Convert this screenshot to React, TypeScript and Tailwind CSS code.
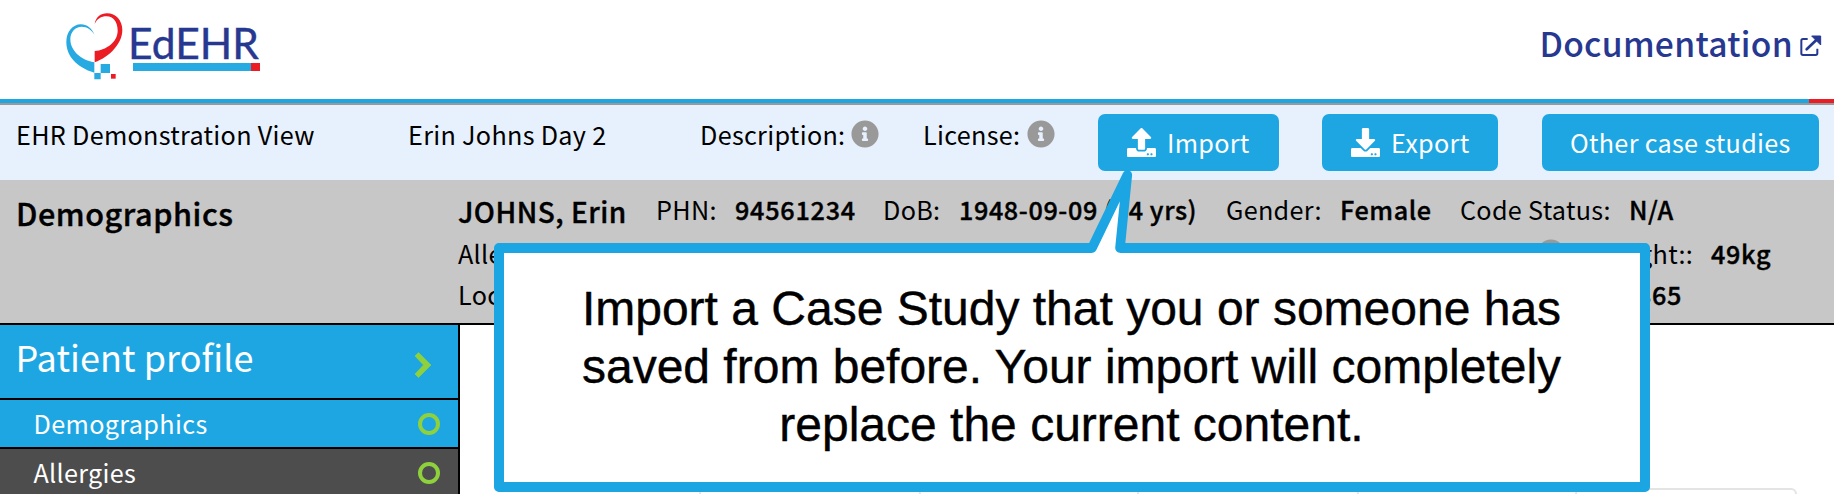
import React from 'react';
import { FaInfoCircle, FaUpload, FaDownload } from 'react-icons/fa';

function Logo() {
  return (
    <div className="ml-[66px] mt-[13px] flex h-[68px]">
      <svg className="h-[68px] w-[58px] shrink-0" viewBox="198 39 174 204">
        <path
          fill="#27a9e1"
          d="M283 104C276 85 260 73 243 73C217 73 199 97 199 126C199 168 230 202 283 218V187C240 180 211 150 211 118C211 96 226 80 245 80C262 80 275 90 283 104Z"
        />
        <path
          fill="#ec1c24"
          d="M284 72C287 52 302 40 321 40C348 40 367 62 367 90C367 130 330 170 284 187V153C320 150 353 125 353 92C353 66 340 49 320 49C303 49 291 57 284 72Z"
        />
        <path fill="#27a9e1" d="M302 192h28v27h-28zM283 219h19v19h-19z" />
        <path fill="#ec1c24" d="M333 222h14v14h-14z" />
      </svg>
      <div className="ml-[9px] mt-[9px] flex w-[127px] flex-col">
        <div className="-ml-[5px] h-[41px] whitespace-nowrap font-['Lato',sans-serif] text-[42.5px] leading-[42px] text-[#273891] [-webkit-text-stroke:0.4px_#273891]">
          EdEHR
        </div>
        <div className="h-2 border-r-[9px] border-[#ec1c24] bg-[#27a9e1]" />
      </div>
    </div>
  );
}

function ExternalLink() {
  return (
    <svg className="ml-[7px] mt-[35px] h-[22px] w-[22px] shrink-0" viewBox="899 106 66 66">
      <path d="M922 118H908Q903 118 903 123V161Q903 166 908 166H946Q951 166 951 161V147" fill="none" stroke="#273891" strokeWidth="6" />
      <path d="M919 149L948 121" stroke="#273891" strokeWidth="8" strokeLinecap="round" />
      <path d="M934 109H961V136Z" fill="#273891" stroke="#273891" strokeWidth="3" strokeLinejoin="round" />
    </svg>
  );
}

function Header() {
  return (
    <header className="flex h-[99px] justify-between">
      <Logo />
      <div className="flex pr-[12px]">
        <a className="mt-[17px] whitespace-nowrap text-[33.6px] font-medium leading-[52px] tracking-[0.3px] text-[#273891]">Documentation</a>
        <ExternalLink />
      </div>
    </header>
  );
}

const button = 'flex h-[57px] shrink-0 items-center whitespace-nowrap rounded-[7px] bg-[#1ea6e3] leading-[57px] text-white';

function DemoBar() {
  return (
    <div className="flex h-[75px] bg-[#e7f1fd] pl-[16px] pt-[9px] leading-[40px] tracking-[0.3px] whitespace-nowrap">
      <div className="w-[392px] shrink-0">EHR Demonstration View</div>
      <div className="w-[292px] shrink-0">Erin Johns Day 2</div>
      <div className="w-[151px] shrink-0">Description:</div>
      <FaInfoCircle className="mt-[6px] size-[28px] shrink-0 text-[#999999]" />
      <div className="ml-[44px] w-[104px] shrink-0">License:</div>
      <FaInfoCircle className="mt-[6px] size-[28px] shrink-0 text-[#999999]" />
      <button className={`${button} ml-[43px] w-[181px] pl-[29px]`}>
        <FaUpload className="mr-[11px] size-[29px]" />
        Import
      </button>
      <button className={`${button} ml-[43px] w-[176px] pl-[29px]`}>
        <FaDownload className="mr-[11px] size-[29px]" />
        Export
      </button>
      <button className={`${button} ml-[44px] w-[277px] pl-[28px]`}>Other case studies</button>
    </div>
  );
}

const strong = 'font-medium [-webkit-text-stroke:0.4px_black]';

function Banner() {
  return (
    <div className="flex h-[145px] border-b-2 border-black bg-[#c7c7c7] pl-[16px] whitespace-nowrap">
      <h1 className={`mt-[13px] w-[442px] shrink-0 text-[30.6px] leading-[40px] tracking-[0.55px] ${strong}`}>Demographics</h1>
      <div className="mt-[9px] flex flex-col leading-[41px] tracking-[0.3px]">
        <div className="flex h-[44px] leading-[41px]">
          <div className={`w-[198px] text-[28px] tracking-[0.5px] leading-[44px] ${strong}`}>JOHNS, Erin</div>
          <div className="w-[79px]">PHN:</div>
          <div className={`w-[148px] tracking-[0.75px] ${strong}`}>94561234</div>
          <div className="w-[76px]">DoB:</div>
          <div className={`w-[267px] tracking-[0.6px] ${strong}`}>1948-09-09 (74 yrs)</div>
          <div className="w-[114px]">Gender:</div>
          <div className={`w-[120px] tracking-[0.6px] ${strong}`}>Female</div>
          <div className="w-[169px]">Code Status:</div>
          <div className={`tracking-[0.6px] ${strong}`}>N/A</div>
        </div>
        <div className="flex h-[41px]">
          <div className="w-[1079px]">Allergies:</div>
          <FaInfoCircle className="mt-[6px] size-[28px] text-[#999999]" />
          <div className="w-[128px] text-right">Weight::</div>
          <div className={`ml-[18px] tracking-[0.7px] ${strong}`}>49kg</div>
        </div>
        <div className="flex h-[41px]">
          <div className="w-[1179px]">Location:</div>
          <div className={`tracking-[0.6px] ${strong}`}>365</div>
        </div>
      </div>
    </div>
  );
}

function Ring() {
  return <span className="size-[22px] rounded-full border-4 border-[#8fd13c]" />;
}

function Sidebar() {
  return (
    <nav className="w-[460px] shrink-0 border-r-2 border-black text-white whitespace-nowrap">
      <div className="flex h-[75px] justify-between border-b-2 border-black bg-[#1ea6e3] pl-[15.5px]">
        <span className="mt-[5px] text-[36px] leading-[52px] tracking-[0.05px]">Patient profile</span>
        <svg className="mr-[27px] mt-[26px] h-[28px] w-[18px]" viewBox="0 0 18 28">
          <path d="M2 5L5.5 1.5L18 14L5.5 26.5L2 23L10.5 14Z" fill="#8fd13c" stroke="#8fd13c" strokeWidth="0.6" strokeLinejoin="round" />
        </svg>
      </div>
      <div className="flex h-[49px] items-center justify-between border-b-2 border-black bg-[#1ea6e3] pl-[33.5px] pr-[18px] leading-[47px] tracking-[0.35px]">
        Demographics
        <Ring />
      </div>
      <div className="flex h-[47px] items-center justify-between bg-[#4d4d4d] pl-[33.5px] pr-[18px] leading-[47px] tracking-[0.3px]">
        Allergies
        <Ring />
      </div>
    </nav>
  );
}

function Tabs() {
  const tab = 'h-5 w-[222px] shrink-0 rounded-t-[6px] border-2 border-[#e4e4e4]';
  return (
    <div className="flex h-[169px] min-w-0 flex-1 overflow-hidden pl-[239px] pt-[163px]">
      <div className={tab} />
      <div className={`${tab} ml-[216px]`} />
      <div className={`${tab} ml-[216px]`} />
    </div>
  );
}

function Callout() {
  return (
    <>
      <div className="absolute left-[494px] top-[243px] flex h-[249px] w-[1156px] justify-center rounded-[5px] border-[10px] border-[#1ba5e3] bg-white pt-[27px] text-center font-['Liberation_Sans',Arial,sans-serif] text-[48px] leading-[58px] text-black [-webkit-text-stroke:0.4px_black]">
        <p className="-ml-px whitespace-nowrap">
          Import a Case Study that you or someone has
          <br />
          saved from before. Your import will completely
          <br />
          replace the current content.
        </p>
      </div>
      <svg className="absolute left-[1080px] top-[165px] h-[90px] w-[60px]" viewBox="1080 165 60 90">
        <path d="M1092 248L1127 175L1120 248V253H1092Z" fill="#fff" />
        <path d="M1092 248L1127.3 175L1120 248" fill="none" stroke="#1ba5e3" strokeWidth="9.6" strokeLinejoin="round" strokeLinecap="round" />
      </svg>
    </>
  );
}

export default function App() {
  return (
    <div className="relative h-[494px] w-[1834px] overflow-hidden bg-white font-['Noto_Sans_CJK_SC',sans-serif] text-[25.2px] text-black">
      <Header />
      <div className="h-[4px] border-r-[25px] border-[#ec1c24] bg-[#1ea6e3]" />
      <div className="h-[2px] bg-[#999999]" />
      <DemoBar />
      <Banner />
      <div className="flex">
        <Sidebar />
        <Tabs />
      </div>
      <Callout />
    </div>
  );
}
